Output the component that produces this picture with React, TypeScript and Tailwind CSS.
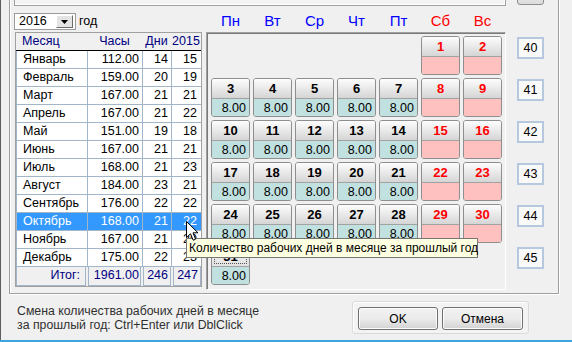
import React from 'react';

const months: [string, string, string, string][] = [
  ['Январь', '112.00', '14', '15'],
  ['Февраль', '159.00', '20', '19'],
  ['Март', '167.00', '21', '21'],
  ['Апрель', '167.00', '21', '22'],
  ['Май', '151.00', '19', '18'],
  ['Июнь', '167.00', '21', '21'],
  ['Июль', '168.00', '21', '23'],
  ['Август', '184.00', '23', '21'],
  ['Сентябрь', '176.00', '22', '22'],
  ['Октябрь', '168.00', '21', '22'],
  ['Ноябрь', '167.00', '21', '20'],
  ['Декабрь', '175.00', '22', '23'],
];

const weekDays = ['Пн', 'Вт', 'Ср', 'Чт', 'Пт', 'Сб', 'Вс'];

const weeks: (number | null)[][] = [
  [null, null, null, null, null, 1, 2],
  [3, 4, 5, 6, 7, 8, 9],
  [10, 11, 12, 13, 14, 15, 16],
  [17, 18, 19, 20, 21, 22, 23],
  [24, 25, 26, 27, 28, 29, 30],
  [31, null, null, null, null, null, null],
];

function DayCell({ day, weekend, focus }: { day: number; weekend: boolean; focus?: boolean }) {
  return (
    <div className="w-[39px] h-[39px] flex flex-col rounded-[3px] border border-[#8e8e8e] overflow-hidden">
      <div
        className={`relative h-[20px] shrink-0 flex items-center justify-center font-bold text-[13px] leading-none border-b border-[#a2a2a2] ${
          focus ? 'bg-gradient-to-b from-[#f4f4f4] to-[#e2e2e2]' : 'bg-gradient-to-b from-[#fdfdfd] to-[#d5d5d5]'
        } ${weekend ? 'text-[#ff0000]' : 'text-black'}`}
      >
        {focus && <div className="absolute inset-[2px] border border-dotted border-[#555]" />}
        <span className="relative">{day}</span>
      </div>
      <div
        className={`flex-1 text-right pr-[3px] text-[12.5px] leading-[18px] ${
          weekend ? 'bg-[#ffc0c0]' : 'bg-[#c0e1df]'
        }`}
      >
        {weekend ? '' : '8.00'}
      </div>
    </div>
  );
}

function Cursor() {
  return (
    <svg
      className="absolute left-[186px] top-[221px]"
      width="13"
      height="21"
      viewBox="0 0 13 21"
    >
      <path
        d="M0.5 0.5 L0.5 16.5 L4.5 12.8 L7.2 19.2 L9.6 18.2 L7 11.8 L12 11.8 Z"
        fill="#ffffff"
        stroke="#000000"
        strokeWidth="1"
        strokeLinejoin="miter"
      />
    </svg>
  );
}

export default function App() {
  return (
    <div className="relative w-[572px] h-[342px] overflow-hidden bg-[#f0f0f0] font-['Liberation_Sans',Arial,sans-serif] text-black">
      <div className="flex h-[340px]">
        <div className="w-px bg-[#5e5e5e] shrink-0" />
        <div className="flex flex-col w-[571px]">
          {/* group box */}
          <div className="ml-[8px] mt-[-20px] w-[550px] h-[314px] shrink-0 border border-[#a0a0a0] shadow-[1px_1px_0_#ffffff,inset_1px_1px_0_#ffffff] flex flex-col">
            {/* top controls cut off */}
            <div className="flex h-[25px] shrink-0">
              <div className="ml-[4px] w-[492px] h-[25px] border border-[#a0a0a0] bg-[#f4f4f4] shadow-[inset_-1px_-1px_0_#ffffff]" />
              <div className="ml-[11px] w-[27px] h-[24px] rounded-b-[3px] border border-[#8e8e8e] bg-gradient-to-b from-[#f0f0f0] to-[#dcdcdc]" />
            </div>
            {/* year + day headers */}
            <div className="flex h-[26px] shrink-0">
              <div className="w-[201px] shrink-0 flex items-start pt-[7px]">
                <div className="ml-[4px] w-[62px] h-[17px] border border-[#9c9c9c] bg-white flex items-center">
                  <span className="pl-[4px] text-[12.5px] leading-none flex-1">2016</span>
                  <div className="w-[17px] h-[13px] mr-[2px] bg-[#e4e4e4] border border-t-white border-l-white border-r-[#6d6d6d] border-b-[#6d6d6d] flex items-center justify-center">
                    <svg width="7" height="4" viewBox="0 0 7 4">
                      <path d="M0 0 L7 0 L3.5 4 Z" fill="#000" />
                    </svg>
                  </div>
                </div>
                <span className="ml-[3px] text-[12.5px] leading-[17px]">год</span>
              </div>
              <div className="grid grid-cols-[repeat(7,39px)] gap-x-[3px] pt-[6px]">
                {weekDays.map((d, i) => (
                  <div
                    key={d}
                    className={`text-center text-[15px] leading-[17px] ${i >= 5 ? 'text-[#ff0000]' : 'text-[#0000ff]'}`}
                  >
                    {d}
                  </div>
                ))}
              </div>
            </div>
            {/* main */}
            <div className="flex h-[258px] shrink-0">
              {/* table */}
              <div className="ml-[5px] w-[187px] h-[255px] border border-[#a0a0a0] flex flex-col text-[12.5px] leading-[17px]">
                <div className="flex h-[17px] shrink-0 text-[#000080]">
                  <div className="w-[71px] pl-[6px]">Месяц</div>
                  <div className="w-[55px] text-center">Часы</div>
                  <div className="w-[29px] text-center">Дни</div>
                  <div className="w-[30px] text-center">2015</div>
                </div>
                <div className="h-px bg-black shrink-0" />
                <div className="flex flex-col bg-[#a3b5c9] pl-px gap-y-px pb-px">
                  {months.map((m, i) => {
                    const sel = i === 9;
                    const cell = sel ? 'bg-[#3399ff] text-white' : 'bg-white';
                    return (
                      <div key={m[0]} className="flex h-[17px] gap-x-px">
                        <div className={`w-[70px] pl-[6px] ${cell}`}>{m[0]}</div>
                        <div className={`w-[54px] text-right pr-[3px] ${cell}`}>{m[1]}</div>
                        <div className={`w-[28px] text-right pr-[3px] ${cell}`}>{m[2]}</div>
                        <div className={`w-[29px] text-right pr-[4px] ${cell}`}>{m[3]}</div>
                      </div>
                    );
                  })}
                </div>
                <div className="flex h-[19px] shrink-0 text-[#000080] gap-x-[2px]">
                  <div className="w-[70px] border border-t-0 border-[#a3b5c9] text-right pr-[5px] leading-[17px]">Итог:</div>
                  <div className="w-[53px] border border-t-0 border-[#a3b5c9] text-right pr-[1px] leading-[17px]">1961.00</div>
                  <div className="w-[28px] border border-t-0 border-[#a3b5c9] text-right pr-[2px] leading-[17px]">246</div>
                  <div className="w-[28px] border border-t-0 border-[#a3b5c9] text-right pr-[2px] leading-[17px]">247</div>
                </div>
              </div>
              {/* calendar panel */}
              <div className="ml-[4px] w-[300px] h-[258px] border border-t-[#a0a0a0] border-l-[#a0a0a0] border-r-white border-b-white shadow-[inset_1px_1px_0_#7a7a7a] pl-[4px] pt-[3px]">
                <div className="grid grid-cols-[repeat(7,39px)] grid-rows-[repeat(6,39px)] gap-[3px]">
                  {weeks.flatMap((w, wi) =>
                    w.map((d, di) =>
                      d === null ? (
                        <div key={`${wi}-${di}`} />
                      ) : (
                        <DayCell key={`${wi}-${di}`} day={d} weekend={di >= 5} focus={d === 31} />
                      )
                    )
                  )}
                </div>
              </div>
              {/* week numbers */}
              <div className="ml-[11px] flex flex-col pt-[5px] gap-y-[20px]">
                {[40, 41, 42, 43, 44, 45].map((n) => (
                  <div
                    key={n}
                    className="w-[27px] h-[22px] border-2 border-[#b6c8de] bg-[#f9f9f9] flex items-center justify-center text-[12.5px] leading-none"
                  >
                    {n}
                  </div>
                ))}
              </div>
            </div>
          </div>
          {/* bottom */}
          <div className="flex mt-[7px]">
            <div className="ml-[16px] w-[335px] pt-[3px] text-[12.3px] leading-[14px] text-[#303030]">
              <div>Смена количества рабочих дней в месяце</div>
              <div>за прошлый год: Ctrl+Enter или DblClick</div>
            </div>
            <div className="w-[177px] h-[33px] rounded-[3px] border border-[#dadada] bg-[#f3f3f3] shadow-[inset_1px_1px_0_#ffffff] flex items-start pl-[5px] pt-[5px] gap-x-[4px]">
              <div className="w-[80px] h-[23px] rounded-[3px] border border-[#707070] bg-gradient-to-b from-[#f2f2f2] via-[#ebebeb] to-[#d3d3d3] shadow-[inset_0_0_0_1px_#fcfcfc] flex items-center justify-center text-[12px]">
                OK
              </div>
              <div className="w-[81px] h-[23px] rounded-[3px] border border-[#707070] bg-gradient-to-b from-[#f2f2f2] via-[#ebebeb] to-[#d3d3d3] shadow-[inset_0_0_0_1px_#fcfcfc] flex items-center justify-center text-[12px]">
                Отмена
              </div>
            </div>
          </div>
        </div>
      </div>
      <div className="h-[2px] bg-[#3aa6dc]" />
      {/* tooltip */}
      <div className="absolute left-[186px] top-[238px] w-[292px] h-[20px] border border-[#767676] bg-[#ffffe1] pl-[2px] text-[12px] leading-[18px] whitespace-nowrap">
        Количество рабочих дней в месяце за прошлый год
      </div>
      <Cursor />
    </div>
  );
}
